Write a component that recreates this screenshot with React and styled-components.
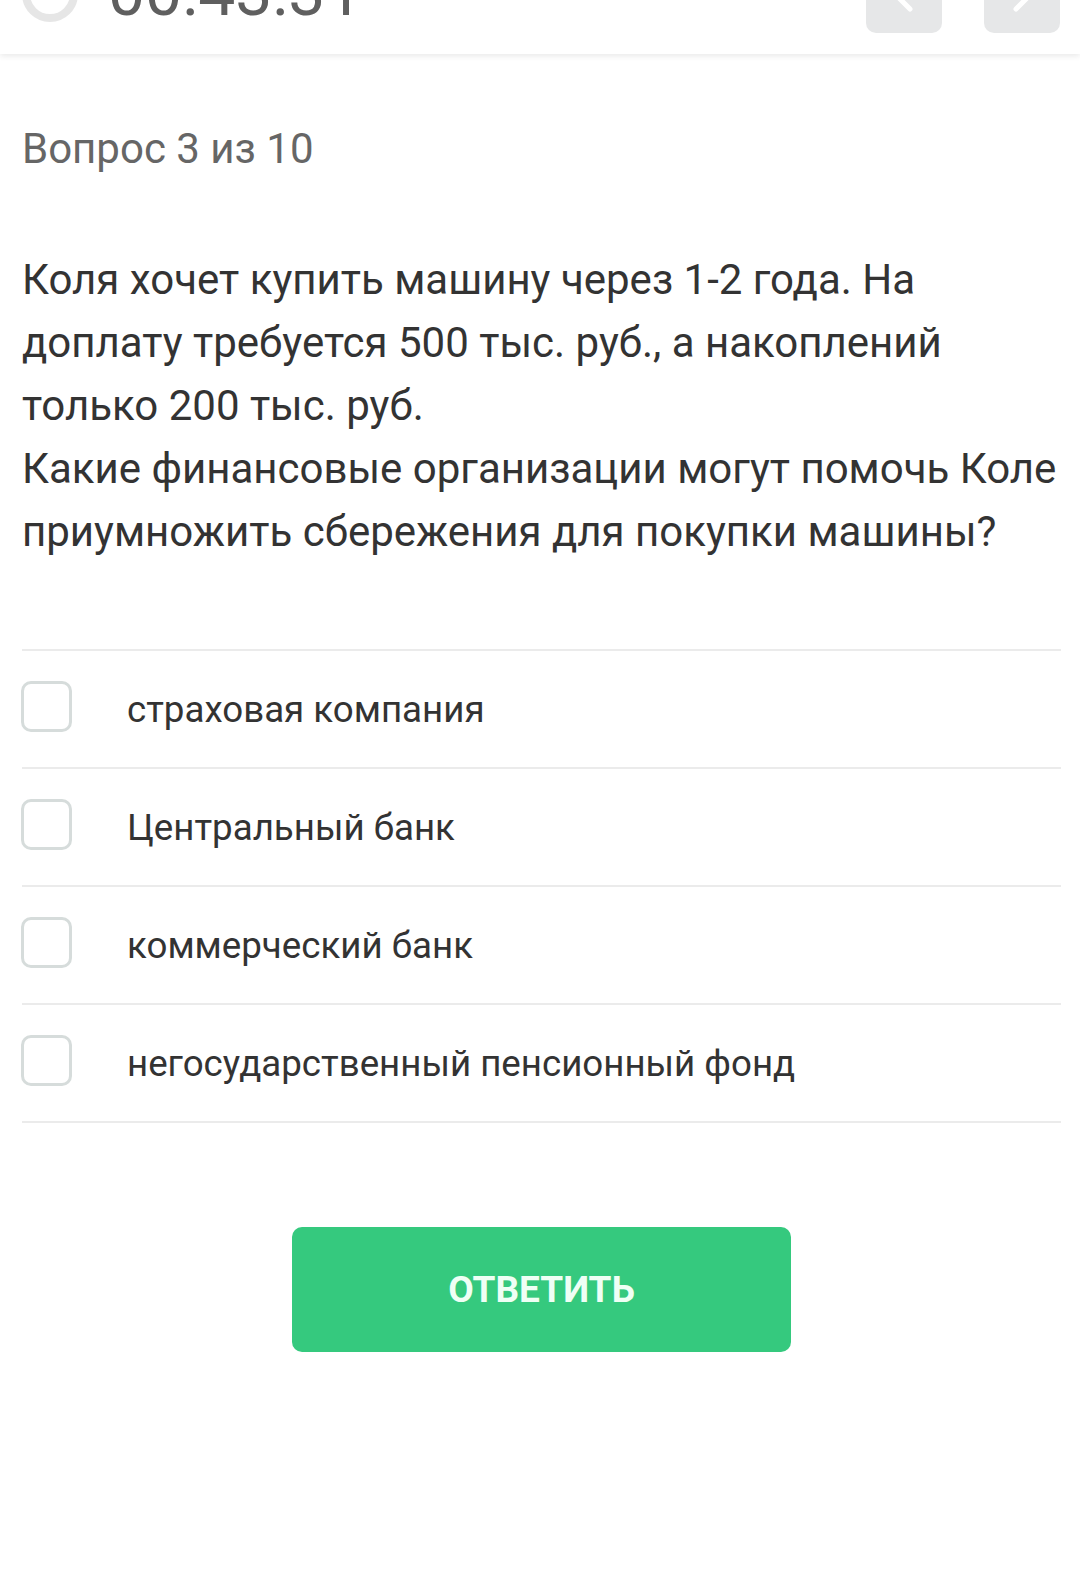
import styled, { createGlobalStyle } from "styled-components";

const GlobalStyle = createGlobalStyle`
  body {
    margin: 0;
    background: #ffffff;
    font-family: Roboto, "Noto Sans", "Liberation Sans", sans-serif;
  }
`;

const options = [
  "страховая компания",
  "Центральный банк",
  "коммерческий банк",
  "негосударственный пенсионный фонд",
];

const App = () => {
  return (
    <Page>
      <GlobalStyle />
      <TopBar>
        <TimerGroup>
          <TimerRing />
          <TimerText>00:43:31</TimerText>
        </TimerGroup>
        <NavGroup>
          <NavButton aria-label="Назад">
            <svg width="40" height="40" viewBox="0 0 40 40">
              <path d="M26 6 L12 20 L26 34" fill="none" stroke="#fff" strokeWidth="5" strokeLinecap="round" strokeLinejoin="round" />
            </svg>
          </NavButton>
          <NavButton aria-label="Вперёд">
            <svg width="40" height="40" viewBox="0 0 40 40">
              <path d="M14 6 L28 20 L14 34" fill="none" stroke="#fff" strokeWidth="5" strokeLinecap="round" strokeLinejoin="round" />
            </svg>
          </NavButton>
        </NavGroup>
      </TopBar>

      <Content>
        <Counter>Вопрос 3 из 10</Counter>
        <Question>
          Коля хочет купить машину через 1-2 года. На доплату требуется 500 тыс. руб., а накоплений только 200 тыс. руб.
          <br />
          Какие финансовые организации могут помочь Коле приумножить сбережения для покупки машины?
        </Question>

        <OptionList>
          {options.map((label) => (
            <OptionRow key={label}>
              <CheckBox />
              <OptionText>{label}</OptionText>
            </OptionRow>
          ))}
        </OptionList>

        <ButtonWrapper>
          <AnswerButton>ОТВЕТИТЬ</AnswerButton>
        </ButtonWrapper>
      </Content>
    </Page>
  );
};

export default App;

const Page = styled.div`
  width: 1080px;
  min-height: 1587px;
  background: #ffffff;
`;

const TopBar = styled.header`
  height: 54px;
  display: flex;
  align-items: flex-end;
  justify-content: space-between;
  padding: 0 20px 0 22px;
  overflow: hidden;
  background: #ffffff;
  box-shadow: 0 2px 6px rgba(0, 0, 0, 0.09);
  position: relative;
  z-index: 1;
`;

const TimerGroup = styled.div`
  display: flex;
  align-items: flex-end;
  gap: 30px;
`;

const TimerRing = styled.div`
  flex: none;
  width: 56px;
  height: 56px;
  box-sizing: border-box;
  border: 8px solid #e6e6e6;
  border-radius: 50%;
  margin-bottom: 32px;
`;

const TimerText = styled.div`
  font-size: 66px;
  line-height: 66px;
  color: #5f5f5f;
  margin-bottom: 28px;
`;

const NavGroup = styled.div`
  display: flex;
  align-items: flex-end;
  gap: 42px;
  margin-bottom: 21px;
`;

const NavButton = styled.button`
  width: 76px;
  height: 76px;
  border: none;
  border-radius: 10px;
  background: #e6e7e8;
  display: flex;
  align-items: center;
  justify-content: center;
  padding: 0;
`;

const Content = styled.main`
  padding: 0 19px 0 22px;
`;

const Counter = styled.div`
  margin-top: 70px;
  font-size: 42px;
  line-height: 50px;
  color: #666666;
`;

const Question = styled.p`
  margin: 74px 0 0;
  font-size: 42px;
  line-height: 63px;
  color: #333333;
`;

const OptionList = styled.div`
  margin-top: 86px;
  border-bottom: 2px solid #ebebeb;
`;

const OptionRow = styled.label`
  display: flex;
  align-items: center;
  height: 116px;
  border-top: 2px solid #ebebeb;
`;

const CheckBox = styled.span`
  flex: none;
  width: 51px;
  height: 51px;
  box-sizing: border-box;
  border: 3.5px solid #d6dcdb;
  border-radius: 10px;
  margin-left: -1px;
  margin-right: 55px;
  margin-bottom: 6px;
`;

const OptionText = styled.span`
  font-size: 36.7px;
  color: #333333;
`;

const ButtonWrapper = styled.div`
  display: flex;
  justify-content: center;
  margin-top: 104px;
`;

const AnswerButton = styled.button`
  width: 499px;
  height: 125px;
  border: none;
  border-radius: 10px;
  background: #35c97e;
  color: #effff5;
  font-family: Roboto, "Liberation Sans", sans-serif;
  font-size: 37px;
  font-weight: 700;
  cursor: pointer;
`;
